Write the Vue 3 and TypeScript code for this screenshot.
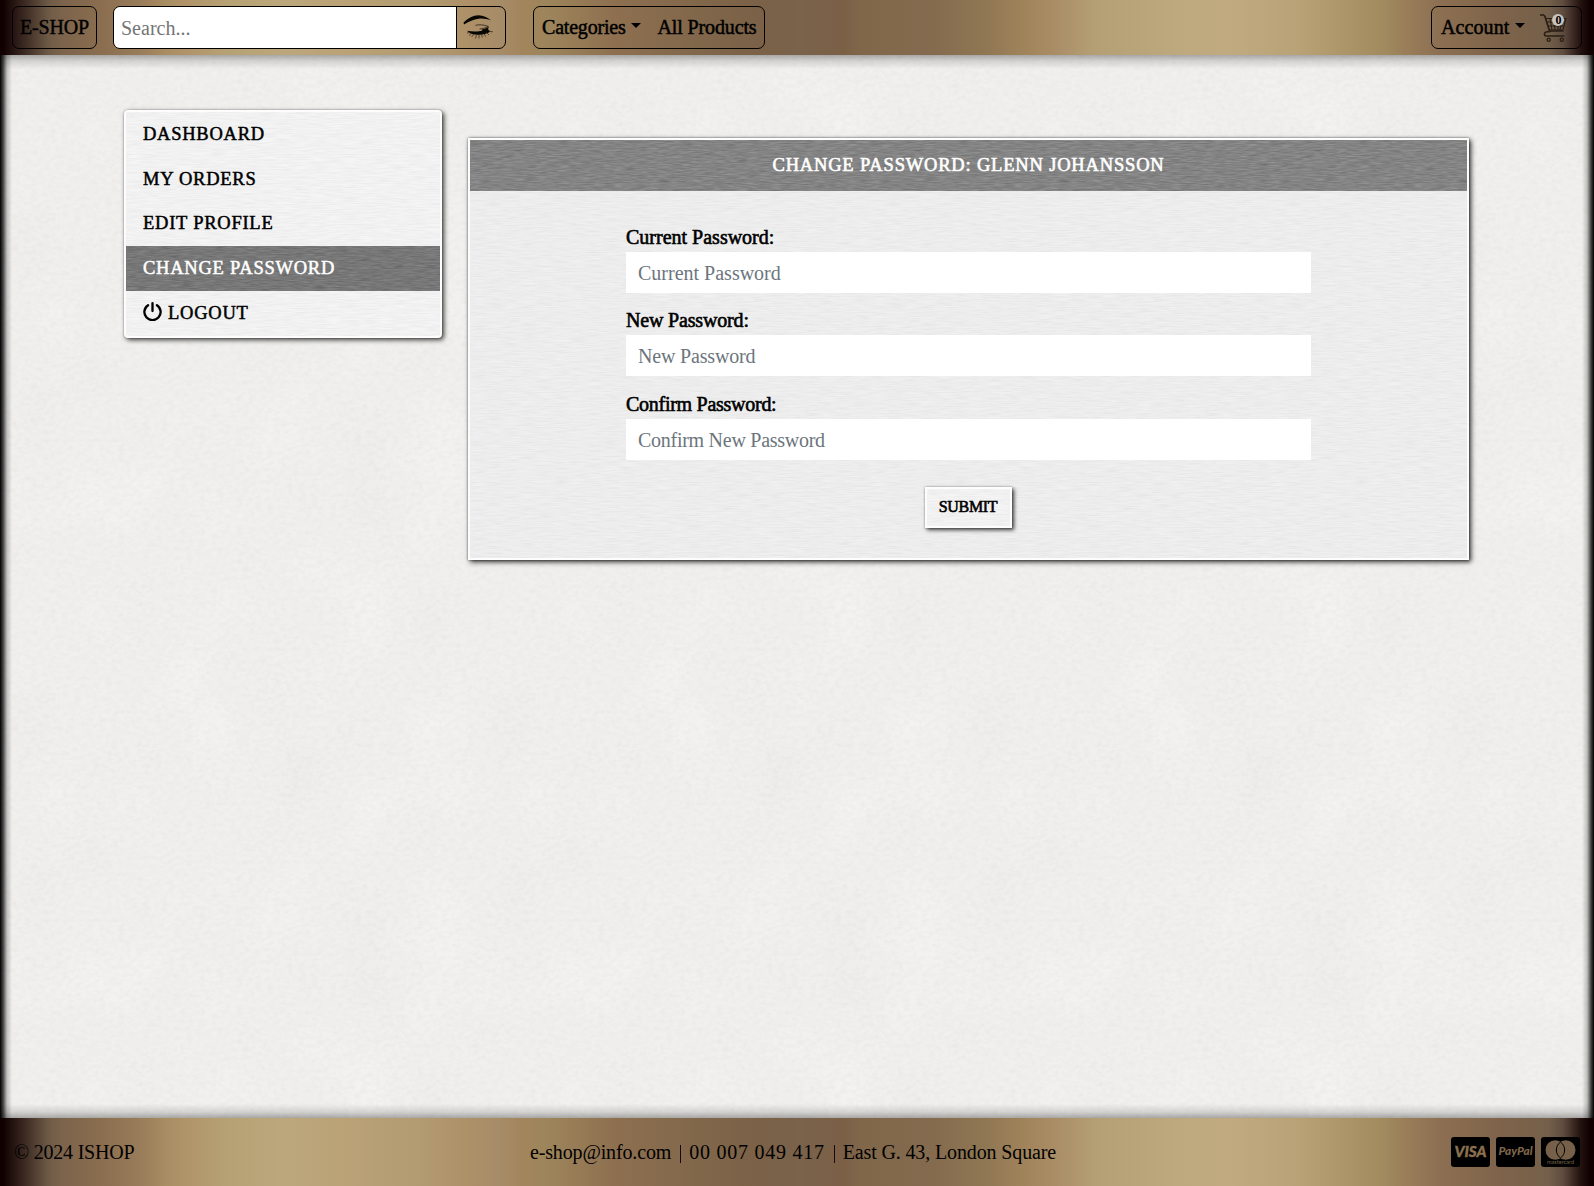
<script setup lang="ts">
interface MenuItem {
  label: string
  active?: boolean
  icon?: boolean
}
interface Field {
  id: string
  label: string
  placeholder: string
}

const menu: MenuItem[] = [
  { label: 'DASHBOARD' },
  { label: 'MY ORDERS' },
  { label: 'EDIT PROFILE' },
  { label: 'CHANGE PASSWORD', active: true },
  { label: 'LOGOUT', icon: true },
]
const fields: Field[] = [
  { id: 'current', label: 'Current Password:', placeholder: 'Current Password' },
  { id: 'new', label: 'New Password:', placeholder: 'New Password' },
  { id: 'confirm', label: 'Confirm Password:', placeholder: 'Confirm New Password' },
]
</script>

<template>
  <div class="page">
    <header class="bar navbar">
      <a class="box brand">E-SHOP</a>
      <form class="box search" @submit.prevent>
        <input type="text" placeholder="Search..." />
        <button type="submit" aria-label="Search">
          <svg width="36" height="30" viewBox="0 0 36 30">
            <path d="M1.500 9.500C6 5 11 2.300 16.500 2.200c5 .2 8.500 2 12.500 5C24.500 5.800 20.500 5 16.500 5.700 11.500 6.500 7.500 8 2 11.500z" fill="#090704" />
            <path d="M13.500 12.300c4-1 8.500-.4 12.500 1M26.500 13.300c-3 1.700-6 2.500-9 2.700" fill="none" stroke="#2a1f12" stroke-width=".8" />
            <path d="M5 17.800c5 1 11 1.200 15.500-.3-1-.5-1-.9 0-1.200 2.500-.3 4.500-1.300 6.500-3-1 2.500-1.500 3.500 1.500 5-2.500 1.700-4 2.700-8.500 3.200-6 .8-11 .3-15-3.700z" fill="#090704" />
            <path d="M8 19.500l-3 .5M9.500 20.500l-2.500 2M12 21l-2.500 3M14.500 21.500l-1 4M17 21.500v4M19.500 21l.8 3.500M22 20.500l1.500 3M24.500 19.500l2.500 2.500M27 18.500l4 .3" stroke="#35291a" stroke-width="1" opacity=".75" />
          </svg>
        </button>
      </form>
      <nav class="box links">
        <a class="cats">Categories</a><i class="caret"></i>
        <a class="all">All Products</a>
      </nav>
      <div class="box account">
        <a class="acc">Account</a><i class="caret"></i>
        <span class="cart">
          <svg width="30" height="30" viewBox="0 0 30 30" fill="none" stroke="#2a1f14" stroke-width="1.100">
            <path d="M1 2h3.500l1.500 1.500 4.500 14.500h14" stroke-width="1.700" />
            <path d="M6.500 5.500h20.500l-3 11.500H10M7.500 9h18.500M8.500 13h17M11 5.500l2 11.500M15 5.500l1 11.500M19 5.500v11.500M23 5.500l-2 11.500" />
            <path d="M11.500 18.500L7 19c-2.300.7-2 4 .3 4h18" stroke-width="1.700" />
            <circle cx="9.700" cy="26.800" r="1.600" stroke-width="1.300" /><circle cx="22.800" cy="26.800" r="1.600" stroke-width="1.300" />
          </svg>
          <b class="badge">0</b>
        </span>
      </div>
    </header>

    <main class="content">
      <aside class="menu linen">
        <a v-for="item in menu" :key="item.label" class="item" :class="{ active: item.active, 'grain-dark': item.active }">
          <svg v-if="item.icon" width="19" height="19" viewBox="0 0 18 18" fill="none" stroke="#000" stroke-width="2.200" stroke-linecap="round">
            <path d="M4.800 3A7.700 7.700 0 1 0 13.200 3M9 1.200v7.300" />
          </svg>
          <span>{{ item.label }}</span>
        </a>
      </aside>

      <section class="card linen">
        <h1 class="title grain-dark">CHANGE PASSWORD: GLENN JOHANSSON</h1>
        <form class="form" @submit.prevent>
          <div v-for="f in fields" :key="f.id" class="field" :class="f.id">
            <label :for="f.id">{{ f.label }}</label>
            <input :id="f.id" type="password" :placeholder="f.placeholder" />
          </div>
          <button class="submit linen" type="submit">SUBMIT</button>
        </form>
      </section>
    </main>

    <footer class="bar footer">
      <span class="copy">© 2024 ISHOP</span>
      <div class="info">
        <span class="mail">e-shop@info.com</span><i class="sep"></i>
        <span class="phone">00 007 049 417</span><i class="sep"></i>
        <span class="addr">East G. 43, London Square</span>
      </div>
      <div class="pay">
        <svg width="39" height="30" viewBox="0 0 39 30">
          <rect width="39" height="30" rx="3" fill="#000" />
          <text x="3.500" y="20.200" textLength="32" lengthAdjust="spacingAndGlyphs" font-size="15" font-weight="900" font-style="italic" fill="#8b7050" stroke="#8b7050" stroke-width=".4">VISA</text>
        </svg>
        <svg width="39" height="30" viewBox="0 0 39 30">
          <rect width="39" height="30" rx="3" fill="#000" />
          <text x="2.500" y="18.200" textLength="34" lengthAdjust="spacingAndGlyphs" font-size="11" font-weight="900" font-style="italic" fill="#7f664a">PayPal</text>
        </svg>
        <svg width="39" height="30" viewBox="0 0 39 30">
          <rect width="39" height="30" rx="3" fill="#000" />
          <circle cx="14.300" cy="13" r="9.800" fill="#77604a" /><circle cx="24.700" cy="13" r="9.800" fill="#77604a" />
          <path d="M19.500 5a9.800 9.800 0 0 1 0 16a9.800 9.800 0 0 1 0-16z" fill="#77604a" stroke="#000" stroke-width="1" />
          <text x="6" y="27.300" textLength="27" lengthAdjust="spacingAndGlyphs" font-size="5.500" fill="#77604a">mastercard</text>
        </svg>
      </div>
    </footer>
  </div>
</template>

<style>
body {
  margin: 0;
  overflow: hidden;
}
</style>

<style scoped>
* {
  box-sizing: border-box;
}
.page {
  width: 100%;
  height: 1186px;
  display: flex;
  flex-direction: column;
  font-family: 'Liberation Serif', serif;
  font-size: 20px;
  line-height: 24px;
  color: #000;
}
.bar {
  flex: none;
  display: flex;
  background: linear-gradient(90deg, #100000 0, #100000 3px, #2c1b17 17px, #6e5b47 49px, #7c634b 62px, #8c6f50 105px, #997c59 140px, #a88c62 165px, #b09369 185px, #b6a174 225px, #bca77c 280px, #bba277 340px, #b39c72 415px, #ad9068 470px, #a68c68 500px, #a3855c 522px, #9d855b 548px, #8e7050 613px, #80664a 706px, #7a6147 761px, #7a624b 800px, #7b6046 844px, #80674a 861px, #846a4e 930px, #8f7753 985px, #a3855c 1030px, #ab8f68 1060px, #b5a075 1097px, #bea87e 1179px, #c1aa80 1230px, #b8a276 1298px, #a08a5e 1385px, #9a7d59 1406px, #8d7052 1438px, #7e634a 1503px, #74604a 1548px, #5f4c3f 1563px, #241310 1580px, #100000 1590px);
}
.navbar {
  height: 55px;
  padding: 6px 12px 0;
}
.box {
  display: flex;
  align-items: center;
  height: 43px;
  border: 1px solid #000;
  border-radius: 7px;
}
.brand {
  width: 85px;
  padding: 0 0 2px 7px;
  letter-spacing: -0.2px;
  -webkit-text-stroke: 0.4px #000;
}
.search {
  width: 393px;
  margin-left: 16px;
  overflow: hidden;
}
.search input {
  width: 342px;
  height: 100%;
  border: 0;
  padding: 1px 7px 0;
  background: #fff;
  font: 20px 'Liberation Serif', serif;
}
.search input::placeholder {
  color: #757575;
}
.search button {
  flex: 1;
  height: 100%;
  padding: 0 0 0 5px;
  border: 0;
  border-left: 1px solid #000;
  background: none;
  display: flex;
  align-items: center;
}
.links {
  width: 232px;
  margin-left: 27px;
  padding-left: 8px;
}
.links a,
.acc {
  padding-bottom: 2px;
  white-space: nowrap;
  -webkit-text-stroke: 0.5px #000;
}
.links .cats {
  letter-spacing: -0.2px;
}
.links .all {
  letter-spacing: -0.13px;
}
.acc {
  letter-spacing: 0.1px;
}
.caret {
  border: 5px solid transparent;
  border-top-color: #000;
  border-bottom: 0;
  margin: 0 17px 4px 5px;
}
.account {
  width: 151px;
  margin-left: auto;
  padding-left: 9px;
}
.account .caret {
  margin-left: 6px;
  margin-right: 14px;
}
.cart {
  position: relative;
  display: flex;
}
.badge {
  position: absolute;
  left: 13px;
  top: 1px;
  width: 12px;
  height: 12px;
  border-radius: 50%;
  background: #c9c5be;
  font-size: 12px;
  line-height: 12px;
  text-align: center;
}
.content {
  flex: 1;
  display: flex;
  align-items: flex-start;
  padding: 55px 125px 0 124px;
  background:
    linear-gradient(90deg, #000 0, rgba(0, 0, 0, 0.72) 3px, rgba(0, 0, 0, 0.2) 7px, transparent 12px, transparent calc(100% - 12px), rgba(0, 0, 0, 0.2) calc(100% - 7px), rgba(0, 0, 0, 0.72) calc(100% - 3px), #000 100%),
    linear-gradient(180deg, rgba(0, 0, 0, 0.3) 0, rgba(0, 0, 0, 0.12) 6px, transparent 14px, transparent calc(100% - 14px), rgba(0, 0, 0, 0.12) calc(100% - 6px), rgba(0, 0, 0, 0.3) 100%),
    url("data:image/svg+xml,%3Csvg xmlns='http://www.w3.org/2000/svg' width='480' height='480'%3E%3Cfilter id='a' x='0' y='0' width='100%25' height='100%25'%3E%3CfeTurbulence type='fractalNoise' baseFrequency='.012 .01' numOctaves='3' stitchTiles='stitch'/%3E%3CfeColorMatrix values='0 0 0 0 .4 0 0 0 0 .4 0 0 0 0 .38 .1 0 0 0 -.02'/%3E%3C/filter%3E%3Crect width='480' height='480' filter='url(%23a)'/%3E%3C/svg%3E"),
    url("data:image/svg+xml,%3Csvg xmlns='http://www.w3.org/2000/svg' width='480' height='480'%3E%3Cfilter id='a' x='0' y='0' width='100%25' height='100%25'%3E%3CfeTurbulence type='fractalNoise' baseFrequency='.16 .24' numOctaves='3' stitchTiles='stitch'/%3E%3CfeColorMatrix values='0 0 0 0 .4 0 0 0 0 .4 0 0 0 0 .38 .19 0 0 0 -.075'/%3E%3C/filter%3E%3Crect width='480' height='480' filter='url(%23a)'/%3E%3C/svg%3E"),
    #f3f2f0;
}
.linen {
  background:
    url("data:image/svg+xml,%3Csvg xmlns='http://www.w3.org/2000/svg' width='400' height='300'%3E%3Cfilter id='a' x='0' y='0' width='100%25' height='100%25'%3E%3CfeTurbulence type='fractalNoise' baseFrequency='.06 .8' numOctaves='2' stitchTiles='stitch'/%3E%3CfeColorMatrix values='0 0 0 0 .3 0 0 0 0 .3 0 0 0 0 .3 .2 0 0 0 -.06'/%3E%3C/filter%3E%3Crect width='400' height='300' filter='url(%23a)'/%3E%3C/svg%3E"),
    #f5f5f5;
}
.menu {
  flex: none;
  width: 318px;
  height: 228px;
  display: flex;
  flex-direction: column;
  border: 2px solid #fdfdfd;
  border-radius: 4px;
  background-clip: padding-box;
  box-shadow: 2px 2px 5px rgba(0, 0, 0, 0.75), 0 0 2px rgba(0, 0, 0, 0.35);
}
.item {
  flex: 1;
  display: flex;
  align-items: center;
  gap: 6px;
  padding: 0 17px 1px;
  font-size: 18.500px;
  letter-spacing: 0.75px;
  -webkit-text-stroke: 0.5px currentColor;
}
.item svg {
  margin-top: -3px;
}
.grain-dark {
  background-image: url("data:image/svg+xml,%3Csvg xmlns='http://www.w3.org/2000/svg' width='400' height='100'%3E%3Cfilter id='a' x='0' y='0' width='100%25' height='100%25'%3E%3CfeTurbulence type='fractalNoise' baseFrequency='.09 .85' numOctaves='2' stitchTiles='stitch'/%3E%3CfeColorMatrix values='0 0 0 0 0 0 0 0 0 0 0 0 0 0 0 .32 0 0 0 -.06'/%3E%3C/filter%3E%3Crect width='400' height='100' filter='url(%23a)'/%3E%3C/svg%3E");
}
.active {
  color: #fff;
  background-color: rgba(0, 0, 0, 0.45);
}
.card {
  width: 1001px;
  height: 422px;
  margin: 28px 0 0 26px;
  border: 2px solid #fdfdfd;
  background-color: #f0f0f0;
  background-clip: padding-box;
  box-shadow: 2px 2px 5px rgba(0, 0, 0, 0.8), 0 0 2px rgba(0, 0, 0, 0.5);
}
.title {
  height: 51px;
  margin: 0;
  color: #fff;
  background-color: rgba(0, 0, 0, 0.38);
  font-size: 18.500px;
  font-weight: 400;
  line-height: 51px;
  letter-spacing: 0.82px;
  text-align: center;
  -webkit-text-stroke: 0.6px #fff;
}
.form {
  width: 685px;
  margin: 0 auto;
  padding-top: 33px;
  display: flex;
  flex-direction: column;
  align-items: center;
}
.field {
  width: 100%;
  height: 83px;
  display: flex;
  flex-direction: column;
}
.field.new {
  height: 84px;
}
.field label {
  height: 28px;
  line-height: 26px;
  -webkit-text-stroke: 0.6px #000;
}
.new label,
.new input::placeholder {
  letter-spacing: -0.17px;
}
.confirm label,
.confirm input::placeholder {
  letter-spacing: -0.27px;
}
.field input {
  height: 41px;
  border: 0;
  padding: 1px 12px 0;
  background: #fff;
  font: 20px 'Liberation Serif', serif;
}
.field input::placeholder {
  color: #6c757d;
}
.submit {
  width: 87px;
  height: 41px;
  margin-top: 13px;
  margin-right: 1px;
  padding: 0 0 1px;
  border: 2px solid #fdfdfd;
  box-shadow: 2px 2px 4px rgba(0, 0, 0, 0.75), 0 0 2px rgba(0, 0, 0, 0.3);
  font: 16px 'Liberation Serif', serif;
  letter-spacing: -0.35px;
  color: #000;
  -webkit-text-stroke: 0.6px #000;
}
.footer {
  height: 68px;
  align-items: center;
  justify-content: space-between;
  padding: 0 14px;
}
.copy {
  width: 516px;
  letter-spacing: -0.22px;
}
.info {
  flex: 1;
  display: flex;
  align-items: center;
  white-space: nowrap;
}
.mail {
  letter-spacing: -0.15px;
}
.phone {
  letter-spacing: 0.75px;
}
.addr {
  letter-spacing: -0.13px;
}
.sep {
  width: 1px;
  height: 18px;
  margin: 3px 8px 0 9px;
  background: #180810;
}
.pay {
  display: flex;
  gap: 6px;
  font-family: Lato, sans-serif;
}
</style>
